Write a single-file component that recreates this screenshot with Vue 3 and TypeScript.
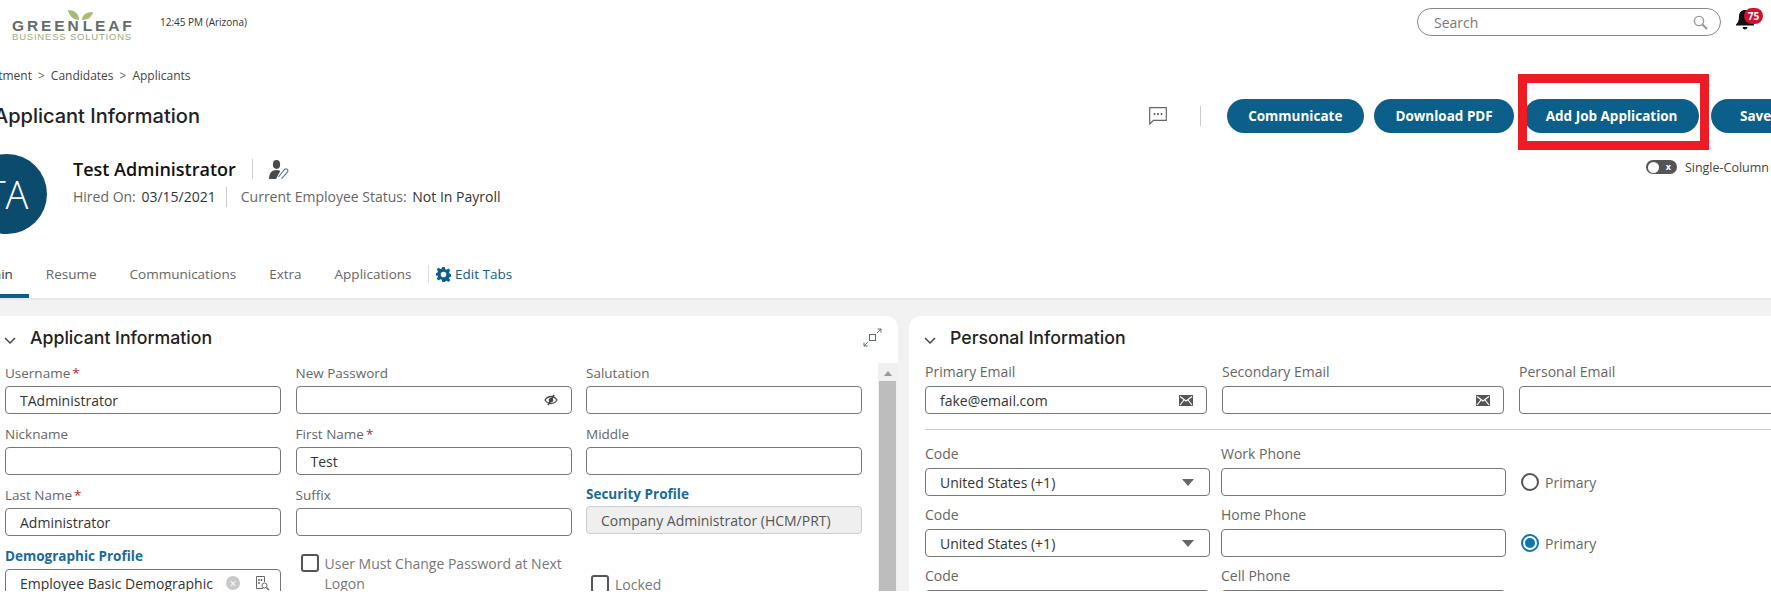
<script setup lang="ts">
interface Field {
  label: string;
  value?: string;
  required?: boolean;
  icon?: 'eye';
}

const crumbs = ['Recruitment', 'Candidates', 'Applicants'];
const actions = ['Communicate', 'Download PDF', 'Add Job Application'];
const tabs = ['Main', 'Resume', 'Communications', 'Extra', 'Applications'];

const applicantFields: Field[] = [
  { label: 'Username', value: 'TAdministrator', required: true },
  { label: 'New Password', icon: 'eye' },
  { label: 'Salutation' },
  { label: 'Nickname' },
  { label: 'First Name', value: 'Test', required: true },
  { label: 'Middle' },
  { label: 'Last Name', value: 'Administrator', required: true },
  { label: 'Suffix' },
];

const emails: Field[] = [
  { label: 'Primary Email', value: 'fake@email.com' },
  { label: 'Secondary Email' },
  { label: 'Personal Email' },
];

const phones = [
  { label: 'Work Phone', primary: false },
  { label: 'Home Phone', primary: true },
  { label: 'Cell Phone', primary: false },
];
</script>

<template>
  <div class="app">
    <header class="topbar">
      <div class="logo">
        <svg class="logo-leaf" width="26" height="12" viewBox="0 0 26 12">
          <path d="M11 11C5 11 1 7 0 1c6 0 11 3 11 10Z" fill="#a8bc78" />
          <path d="M14 11c0-5 4-8 11-8-1 5-5 8-11 8Z" fill="#a8bc78" />
        </svg>
        <div class="logo-main">GREEN<span class="logo-bar"></span>LEAF</div>
        <div class="logo-sub">BUSINESS SOLUTIONS</div>
      </div>
      <span class="clock">12:45 PM (Arizona)</span>
      <div class="search">
        <span>Search</span>
        <svg width="15" height="15" viewBox="0 0 15 15" fill="none" stroke="#999" stroke-width="1.4">
          <circle cx="6" cy="6" r="4.6" />
          <path d="m9.5 9.5 4.5 4.5" stroke-width="2" />
        </svg>
      </div>
      <div class="bell">
        <svg width="18" height="21" viewBox="0 0 18 21" fill="#111">
          <path d="M9 1c-3.600 0-6 2.600-6 6.200 0 4.300-1 6.100-3 8.300v1h18v-1c-2-2.200-3-4-3-8.300C15 3.600 12.600 1 9 1Z" />
          <path d="M6.500 18h5a2.500 2.500 0 0 1-5 0Z" />
        </svg>
        <span class="badge">75</span>
      </div>
    </header>

    <main class="main">
      <nav class="breadcrumb">
        <template v-for="(crumb, idx) in crumbs" :key="crumb">
          <span v-if="idx > 0" class="crumb-sep">&gt;</span>
          <span>{{ crumb }}</span>
        </template>
      </nav>

      <div class="title-row">
        <h1>Applicant Information</h1>
        <div class="actions">
          <svg class="chat-icon" width="18" height="18" viewBox="0 0 18 18" fill="none">
            <path d="M.7.7h16.600v12.600H4.500L.7 17Z" stroke="#666" stroke-width="1.200" />
            <circle cx="5.500" cy="7" r="1" fill="#555" />
            <circle cx="9" cy="7" r="1" fill="#555" />
            <circle cx="12.500" cy="7" r="1" fill="#555" />
          </svg>
          <span class="action-divider"></span>
          <button v-for="action in actions" :key="action" class="btn">{{ action }}</button>
          <button class="btn btn-save">Save</button>
        </div>
      </div>

      <section class="profile">
        <div class="avatar">TA</div>
        <div class="profile-info">
          <div class="name-row">
            <span class="name">Test Administrator</span>
            <svg width="20" height="19" viewBox="0 0 20 19">
              <ellipse cx="7.500" cy="4.500" rx="3.600" ry="4.400" fill="#4a4a4a" />
              <path d="M0 19c0-6 3-9 7.500-9 1.500 0 2.800.4 3.800 1L7 19Z" fill="#4a4a4a" />
              <path d="m9.500 17 6-7.500a1.900 1.900 0 0 1 3 2.300l-6 7" fill="none" stroke="#5b7f9a" stroke-width="1.200" />
            </svg>
          </div>
          <div class="meta-row">
            <span class="meta-first">Hired On: <em>03/15/2021</em></span>
            <span>Current Employee Status: <em>Not In Payroll</em></span>
          </div>
        </div>
        <div class="column-toggle">
          <span class="switch"><i></i><b>x</b></span>
          <span>Single-Column</span>
        </div>
      </section>

      <nav class="tabs">
        <a v-for="(tab, idx) in tabs" :key="tab" class="tab" :class="{ active: idx === 0 }">{{ tab }}</a>
        <a class="edit-tabs">
          <svg width="15" height="15" viewBox="0 0 24 24" fill="#0b5f8a">
            <path d="M10 0h4l.7 3.500 2.300 1 3-2 2.800 2.800-2 3 1 2.300 3.500.7v4l-3.500.7-1 2.300 2 3-2.800 2.800-3-2-2.300 1L14 24h-4l-.7-3.500-2.300-1-3 2-2.800-2.800 2-3-1-2.300L-1 14v-4l3.200-.7 1-2.300-2-3L4 1.200l3 2 2.300-1Zm2 7.500a4.500 4.500 0 1 0 0 9 4.500 4.500 0 0 0 0-9Z" fill-rule="evenodd" />
          </svg>
          Edit Tabs
        </a>
      </nav>

      <div class="panels">
        <section class="panel panel-left">
          <div class="panel-head">
            <svg class="chevron" width="12" height="8" viewBox="0 0 12 8" fill="none" stroke="#444" stroke-width="1.500"><path d="m1 1 5 5 5-5" /></svg>
            <h2>Applicant Information</h2>
            <svg class="expand" width="19" height="19" viewBox="0 0 19 19" fill="none" stroke="#5d6b75" stroke-width="1">
              <rect x="6.500" y="6.500" width="6" height="6" />
              <path d="M14 5l4-4M14.500 1H18v3.500M5 14l-4 4M1 14.500V18h3.500" />
            </svg>
          </div>
          <div class="panel-body">
            <div class="form-grid">
              <div v-for="field in applicantFields" :key="field.label" class="field">
                <label>{{ field.label }}<span v-if="field.required" class="req">*</span></label>
                <div class="input">
                  <span>{{ field.value }}</span>
                  <svg v-if="field.icon === 'eye'" class="eye" width="14" height="12" viewBox="0 0 14 12" fill="none" stroke="#444" stroke-width="1.300">
                    <path d="M1 6c1.500-2.300 3.500-3.500 6-3.500S11.500 3.700 13 6c-1.500 2.300-3.500 3.500-6 3.500S2.500 8.300 1 6Z" />
                    <circle cx="7" cy="6" r="1.600" fill="#444" />
                    <path d="M10 1 4 11" stroke-width="1.600" />
                  </svg>
                </div>
              </div>
              <div class="field field-security">
                <label class="strong">Security Profile</label>
                <div class="input input-disabled"><span>Company Administrator (HCM/PRT)</span></div>
              </div>
              <div class="field">
                <label class="strong">Demographic Profile</label>
                <div class="input">
                  <span class="clip">Employee Basic Demographic</span>
                  <span class="clear">×</span>
                  <svg class="lookup" width="15" height="15" viewBox="0 0 15 15" fill="none" stroke="#666">
                    <path d="M8 12.500H1.500v-12h8V6" />
                    <path d="M3.500 3.500h1v1h-1zM6 3.500h1v1H6zM3.500 6.500h1v1h-1z" />
                    <circle cx="9.500" cy="9.500" r="2.500" />
                    <path d="m11.500 11.500 2.500 2.500" stroke-width="1.500" />
                  </svg>
                </div>
              </div>
              <div class="check check-change">
                <span class="box"></span>
                <span>User Must Change Password at Next Logon</span>
              </div>
              <div class="check check-locked">
                <span class="box"></span>
                <span>Locked</span>
              </div>
            </div>
            <div class="scrollbar">
              <span class="scroll-arrow"></span>
              <span class="scroll-thumb"></span>
            </div>
          </div>
        </section>

        <section class="panel panel-right">
          <div class="panel-head">
            <svg class="chevron" width="12" height="8" viewBox="0 0 12 8" fill="none" stroke="#444" stroke-width="1.500"><path d="m1 1 5 5 5-5" /></svg>
            <h2>Personal Information</h2>
          </div>
          <div class="email-grid">
            <div v-for="(field, idx) in emails" :key="field.label" class="field">
              <label>{{ field.label }}</label>
              <div class="input">
                <span>{{ field.value }}</span>
                <svg v-if="idx < 2" class="mail" width="14" height="11" viewBox="0 0 14 11">
                  <rect width="14" height="11" fill="#555" />
                  <path d="M1 1.500 7 6l6-4.500M1 10l4-5M13 10 9 5" fill="none" stroke="#fff" stroke-width="1.200" />
                </svg>
              </div>
            </div>
          </div>
          <hr />
          <div class="phone-grid">
            <template v-for="phone in phones" :key="phone.label">
              <div class="field">
                <label>Code</label>
                <div class="input">
                  <span>United States (+1)</span>
                  <span class="caret"></span>
                </div>
              </div>
              <div class="field">
                <label>{{ phone.label }}</label>
                <div class="input"></div>
              </div>
              <div class="radio-wrap">
                <span class="radio" :class="{ on: phone.primary }"></span>
                <span>Primary</span>
              </div>
            </template>
          </div>
        </section>
      </div>
    </main>

    <div class="highlight"></div>
  </div>
</template>

<style scoped>
.app { position: relative; width: 1771px; height: 591px; overflow: hidden; background: #fff; font-family: 'Open Sans', 'Noto Sans', sans-serif; font-size: 14px; color: #666; }

.topbar { display: flex; height: 66px; padding-left: 12px; box-sizing: border-box; }
.logo { position: relative; width: 122px; padding-top: 19px; }
.logo-leaf { position: absolute; left: 56px; top: 9px; }
.logo-main { display: flex; align-items: center; height: 13px; font-family: 'Liberation Sans', sans-serif; font-weight: 700; font-size: 15.5px; letter-spacing: 2.9px; color: #666b6c; white-space: nowrap; }
.logo-bar { width: 1px; height: 17px; margin: -4px 2px 0 -1px; background: #8a9a6a; }
.logo-sub { margin-top: 0; font-family: 'Liberation Sans', sans-serif; font-size: 9.5px; line-height: 10px; letter-spacing: .8px; color: #9aaa7e; white-space: nowrap; }
.clock { margin: 14px 0 0 26px; font-size: 10px; line-height: 16px; color: #333; }
.search { display: flex; align-items: center; justify-content: space-between; width: 304px; height: 28px; box-sizing: border-box; margin: 8px 0 0 auto; padding: 0 12px 0 16px; border: 1px solid #888; border-radius: 14px; color: #777; }
.bell { position: relative; flex-shrink: 0; width: 35px; height: 30px; margin: 9px 0 0 15px; }
.badge { position: absolute; left: 8px; top: -1px; display: flex; align-items: center; justify-content: center; width: 19px; height: 16px; border-radius: 8px; background: #d0102f; color: #fff; font-size: 10px; font-weight: 700; }

.main { width: 1844px; margin-left: -33px; }
.breadcrumb { display: flex; gap: 6px; height: 20px; line-height: 20px; font-size: 12px; color: #444; margin-left: -4px; }
.crumb-sep { color: #666; }

.title-row { display: flex; align-items: center; height: 34px; margin-top: 13px; }
h1 { margin: 0 0 0 27px; font-family: Inter, sans-serif; font-size: 20px; font-weight: 500; color: #222; white-space: nowrap; }
.actions { display: flex; align-items: center; margin-left: auto; }
.chat-icon { margin-right: 33px; }
.action-divider { width: 1px; height: 20px; background: #ccc; margin-right: 26px; }
.btn { height: 34px; padding: 0 21.5px; margin-left: 10px; border: 0; border-radius: 17px; background: #0b5f8a; color: #fff; font-family: 'Open Sans', sans-serif; font-size: 13.5px; font-weight: 700; white-space: nowrap; }
.action-divider + .btn { margin-left: 0; }
.btn-save { width: 100px; padding: 0 0 0 29px; margin-left: 12px; text-align: left; }

.profile { display: flex; height: 80px; margin-top: 21px; }
.avatar { display: flex; align-items: center; justify-content: center; flex-shrink: 0; width: 80px; height: 80px; border-radius: 50%; background: #0c4a6e; color: #fff; font-size: 38px; font-weight: 300; }
.profile-info { margin-left: 26px; padding-top: 5px; }
.name-row { display: flex; align-items: center; height: 20px; }
.name { padding-right: 16px; margin-right: 16px; border-right: 1px solid #ccc; font-size: 18px; font-weight: 600; color: #111; white-space: nowrap; line-height: 20px; }
.meta-row { display: flex; margin-top: 8px; line-height: 20px; white-space: nowrap; }
.meta-row em { margin-left: 2px; font-style: normal; color: #333; }
.meta-first { padding-right: 10px; margin-right: 14px; border-right: 1px solid #ccc; }
.column-toggle { display: flex; align-items: center; gap: 8px; height: 14px; margin: 6px 42px 0 auto; font-size: 12.5px; color: #444; }
.switch { display: flex; align-items: center; justify-content: space-between; width: 31px; height: 14px; box-sizing: border-box; padding: 0 6px 0 2px; border-radius: 7px; background: #555; }
.switch i { width: 11px; height: 11px; border-radius: 50%; background: #fff; }
.switch b { font-size: 9px; line-height: 12px; color: #fff; }

.tabs { display: flex; align-items: flex-end; height: 44px; margin: 20px 0 0 -2px; }
.tab { display: flex; align-items: center; height: 44px; box-sizing: border-box; padding: 0 16.5px 4px; color: #666; font-size: 13.5px; }
.tab.active { border-bottom: 4px solid #0b5f8a; padding-bottom: 0; color: #333; }
.edit-tabs { display: flex; align-items: center; gap: 4px; align-self: center; padding-left: 7px; margin-bottom: 4px; height: 18px; border-left: 1px solid #ddd; color: #0b5f8a; font-size: 13.5px; }

.panels { display: grid; grid-template-columns: 921px 1fr; gap: 11px; padding: 16px 0 0 10px; height: 400px; box-sizing: border-box; background: #f2f2f2; border-top: 2px solid #e8e8e8; }
.panel { background: #fff; border-radius: 12px 12px 0 0; }
.panel-head { position: relative; display: flex; align-items: center; height: 46px; padding-bottom: 1px; box-sizing: border-box; }
.panel-left .panel-head { padding-left: 27px; }
.panel-right .panel-head { padding-left: 15px; }
.chevron { margin-top: 4px; }
h2 { margin: 0 0 2px 14px; font-family: Inter, sans-serif; font-size: 17.7px; font-weight: 500; color: #222; white-space: nowrap; }
.expand { position: absolute; right: 16px; top: 12px; }

.panel-body { display: flex; }
.form-grid { display: grid; grid-template-columns: repeat(3, 276px); gap: 9px 14.5px; align-content: start; width: 893px; padding-left: 28px; box-sizing: border-box; flex-shrink: 0; }
.field { min-width: 0; }
label { display: block; height: 20px; margin-bottom: 4px; line-height: 20px; font-size: 13.5px; color: #666; white-space: nowrap; }
.form-grid label { height: 19px; padding-top: 1px; }
.req { margin-left: 2px; color: #c0272d; }
label.strong { color: #1a6a9a; font-weight: 700; font-size: 13.5px; }
.input { display: flex; align-items: center; height: 28px; box-sizing: border-box; padding: 0 14px; border: 1px solid #777; border-radius: 4px; color: #333; background: #fff; white-space: nowrap; }
.input > span:first-child { flex: 1; }
.input-disabled { background: #efefef; border-color: #ccc; color: #555; }
.field-security { margin-top: -1px; }
.field-security label { margin-bottom: 3px; }
.eye { margin-right: -1px; }
.clip { overflow: hidden; min-width: 0; }
.clear { display: flex; align-items: center; justify-content: center; flex-shrink: 0; width: 14px; height: 14px; margin: 0 15px 0 11px; border-radius: 50%; background: #c8c8c8; color: #fff; font-size: 12px; }
.lookup { flex-shrink: 0; margin-right: -4px; }
.check { display: flex; gap: 6px; line-height: 20px; color: #777; }
.box { flex-shrink: 0; width: 18px; height: 18px; box-sizing: border-box; border: 2px solid #555; border-radius: 3px; }
.check-change { margin: 9px 0 0 5px; width: 262px; }
.check-locked { margin: 30px 0 0 5px; }

.scrollbar { display: flex; flex-direction: column; align-items: center; width: 21px; margin: 1px 0 0 7.5px; background: #f0f0f0; height: 228px; }
.scroll-arrow { width: 0; height: 0; margin: 8px 0 5px; border-left: 4px solid transparent; border-right: 4px solid transparent; border-bottom: 5px solid #999; }
.scroll-thumb { flex: 1; width: 17px; background: #bdbdbd; }

.email-grid { display: grid; grid-template-columns: repeat(3, 282px); gap: 15px; padding-left: 16px; }
.panel-right label { font-size: 14px; }
.mail { flex-shrink: 0; margin-right: -1px; }
hr { height: 1px; margin: 15px 0 14px 16px; border: 0; background: #ccc; }
.phone-grid { display: grid; grid-template-columns: 285px 285px auto; gap: 9px 11px; padding-left: 16px; }
.caret { width: 0; height: 0; margin-right: 1px; border-left: 6px solid transparent; border-right: 6px solid transparent; border-top: 7px solid #666; }
.radio-wrap { display: flex; align-items: center; gap: 6px; height: 28px; margin: 24px 0 0 4px; font-size: 14px; color: #666; }
.radio { position: relative; width: 18px; height: 18px; box-sizing: border-box; border: 2px solid #555; border-radius: 50%; }
.radio.on { border-color: #0f75b5; }
.radio.on::after { content: ''; position: absolute; left: 2px; top: 2px; width: 10px; height: 10px; border-radius: 50%; background: #0f75b5; }

.highlight { position: absolute; left: 1518px; top: 74px; width: 191px; height: 76px; box-sizing: border-box; border: 9.5px solid #ed1c24; pointer-events: none; }
</style>
